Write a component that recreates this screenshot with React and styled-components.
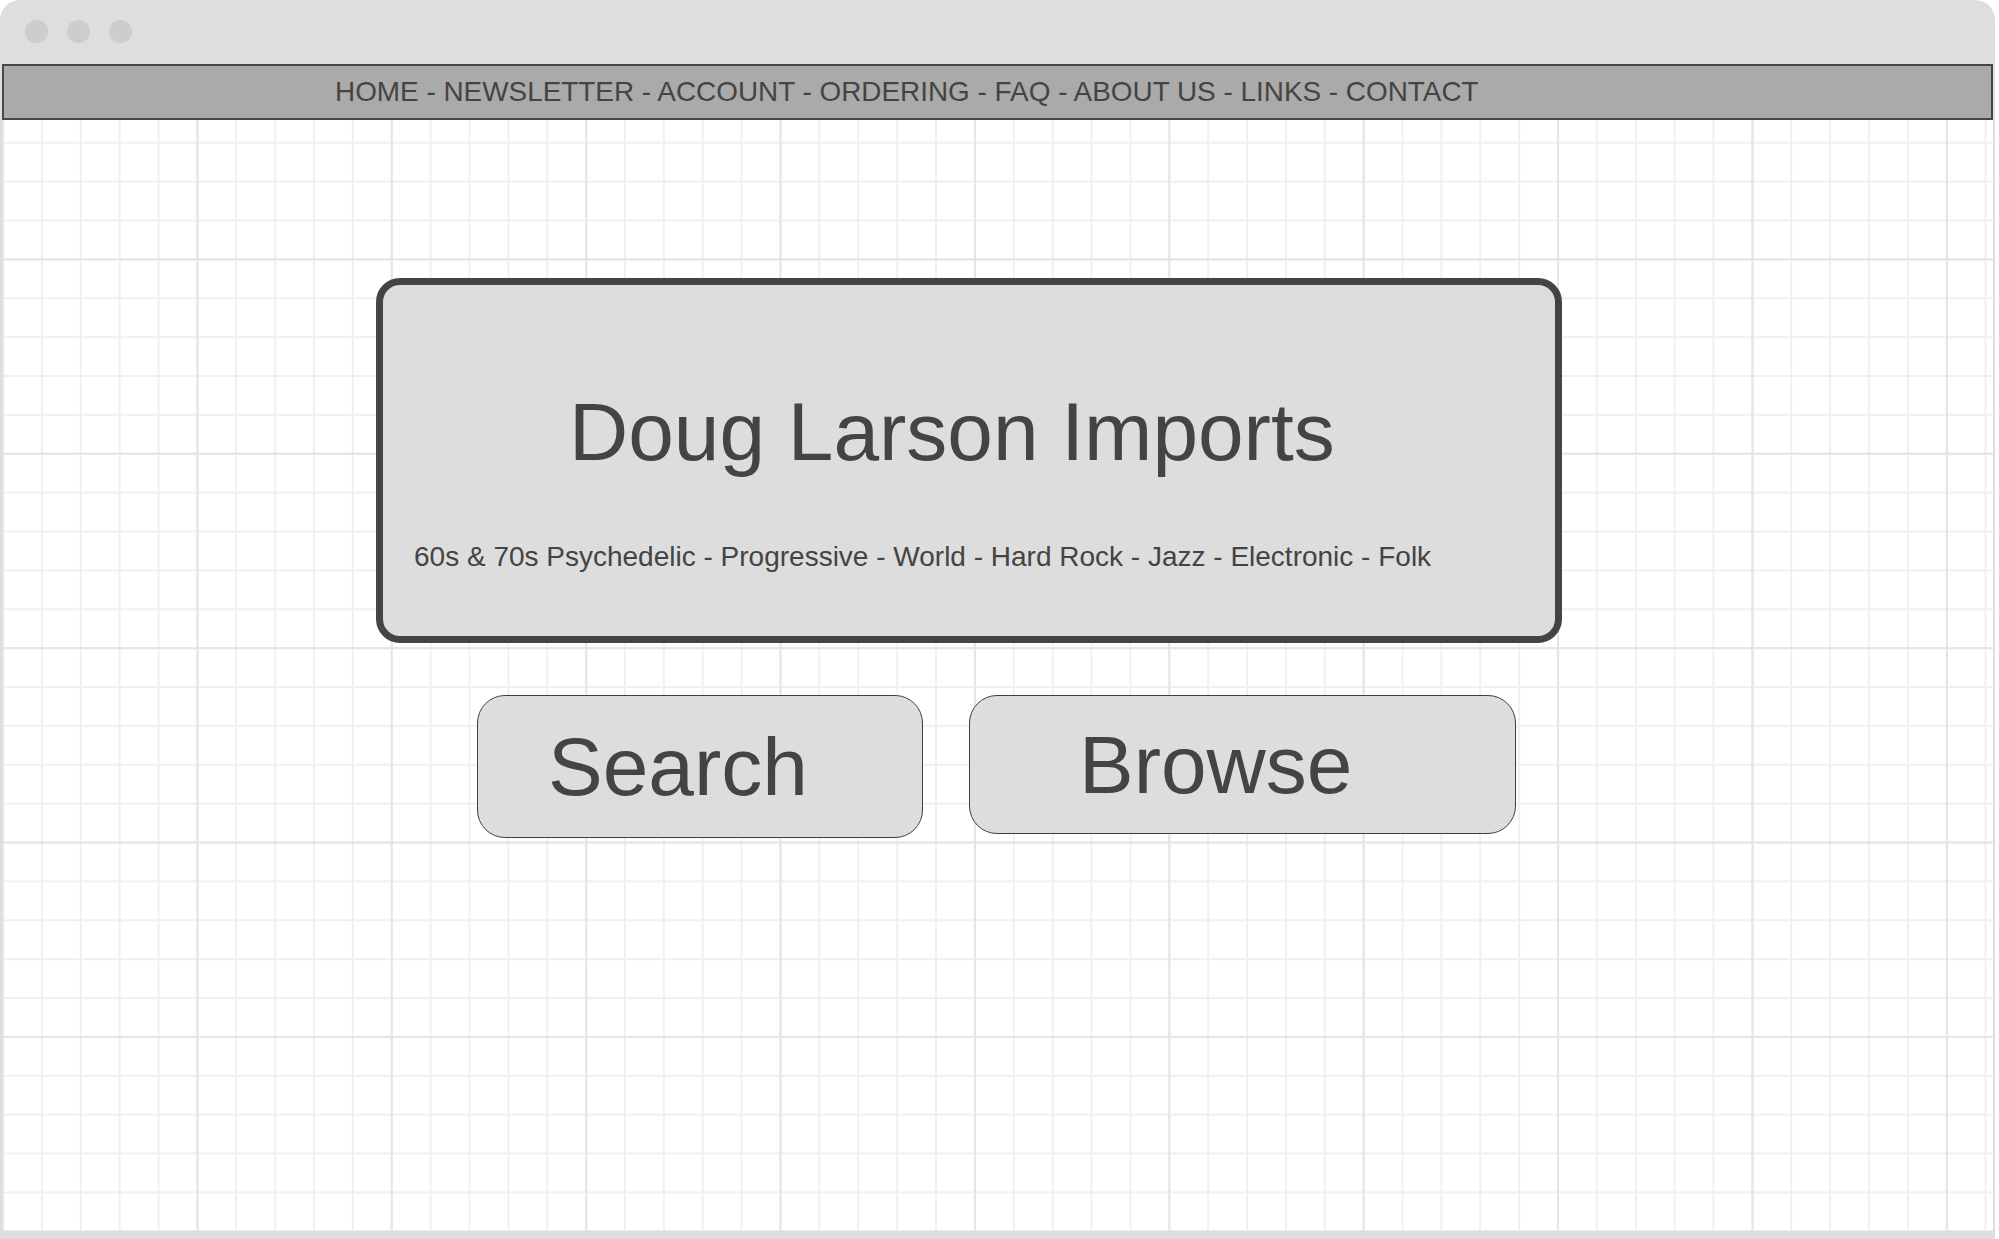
import React from "react";
import styled, { createGlobalStyle } from "styled-components";

const colors = {
  frame: "#dedede",
  dot: "#cdcdcd",
  ink: "#444444",
  nav: "#aaaaaa",
  panel: "#dddddd",
  gridMinor: "#f0f0f0",
  gridMajor: "#e5e5e5",
};

const GlobalStyle = createGlobalStyle`
  html, body {
    margin: 0;
    padding: 0;
    background: #ffffff;
  }
  body {
    font-family: "Liberation Sans", Arial, sans-serif;
    color: ${colors.ink};
  }
`;

const Window = styled.div`
  width: 1995px;
  height: 1239px;
  box-sizing: border-box;
  padding: 0 2px 8px 2px;
  background: ${colors.frame};
  border-radius: 20px 20px 0 0;
  display: flex;
  flex-direction: column;
  overflow: hidden;
`;

const TitleBar = styled.div`
  height: 64px;
  flex-shrink: 0;
  display: flex;
  align-items: center;
  gap: 19px;
  padding-left: 23px;
`;

const Dot = styled.span`
  width: 23px;
  height: 23px;
  border-radius: 50%;
  background: ${colors.dot};
  margin-top: -2px;
`;

const Canvas = styled.div`
  flex: 1;
  display: flex;
  flex-direction: column;
  background-color: #ffffff;
  background-image:
    linear-gradient(to right, ${colors.gridMajor} 0 2px, transparent 2px),
    linear-gradient(to bottom, ${colors.gridMajor} 0 2px, transparent 2px),
    linear-gradient(to right, ${colors.gridMinor} 0 2px, transparent 2px),
    linear-gradient(to bottom, ${colors.gridMinor} 0 2px, transparent 2px);
  background-size: 194.4px 194.4px, 194.4px 194.4px, 38.88px 38.88px, 38.88px 38.88px;
`;

const NavBar = styled.nav`
  height: 56px;
  box-sizing: border-box;
  border: 2px solid #474747;
  background: ${colors.nav};
  display: flex;
  align-items: center;
  padding-left: 331px;
  font-size: 27.9px;
  line-height: 1;
  white-space: nowrap;
`;

const Main = styled.main`
  display: flex;
  flex-direction: column;
  align-items: flex-start;
`;

const HeroCard = styled.section`
  margin: 158px 0 0 374px;
  width: 1186px;
  height: 365px;
  box-sizing: border-box;
  border: 7px solid ${colors.ink};
  border-radius: 24px;
  background: ${colors.panel};
  display: flex;
  flex-direction: column;
  align-items: flex-start;
`;

const Title = styled.h1`
  margin: 106px 0 0 186px;
  font-size: 82px;
  font-weight: normal;
  line-height: 1;
  white-space: nowrap;
`;

const Genres = styled.p`
  margin: 70px 0 0 31px;
  font-size: 28px;
  line-height: 1;
  white-space: nowrap;
`;

const ButtonRow = styled.div`
  display: flex;
  align-items: flex-start;
  gap: 46px;
  margin: 52px 0 0 475px;
`;

const BigButton = styled.button`
  width: ${(p) => p.$w}px;
  height: ${(p) => p.$h}px;
  box-sizing: border-box;
  padding: 0 0 0 ${(p) => p.$pad}px;
  border: 1.6px solid #3f3f3f;
  border-radius: 28px;
  background: ${colors.panel};
  color: ${colors.ink};
  font-family: inherit;
  font-size: 82px;
  line-height: 1;
  display: flex;
  align-items: center;
  cursor: pointer;
`;

const navItems = ["HOME", "NEWSLETTER", "ACCOUNT", "ORDERING", "FAQ", "ABOUT US", "LINKS", "CONTACT"];

const genres = [
  "60s & 70s Psychedelic",
  "Progressive",
  "World",
  "Hard Rock",
  "Jazz",
  "Electronic",
  "Folk",
];

const App = () => {
  return (
    <>
      <GlobalStyle />
      <Window>
        <TitleBar>
          <Dot />
          <Dot />
          <Dot />
        </TitleBar>
        <Canvas>
          <NavBar>{navItems.join(" - ")}</NavBar>
          <Main>
            <HeroCard>
              <Title>Doug Larson Imports</Title>
              <Genres>{genres.join(" - ")}</Genres>
            </HeroCard>
            <ButtonRow>
              <BigButton $w={446} $h={143} $pad={70}>
                Search
              </BigButton>
              <BigButton $w={547} $h={139} $pad={109}>
                Browse
              </BigButton>
            </ButtonRow>
          </Main>
        </Canvas>
      </Window>
    </>
  );
};

export default App;
